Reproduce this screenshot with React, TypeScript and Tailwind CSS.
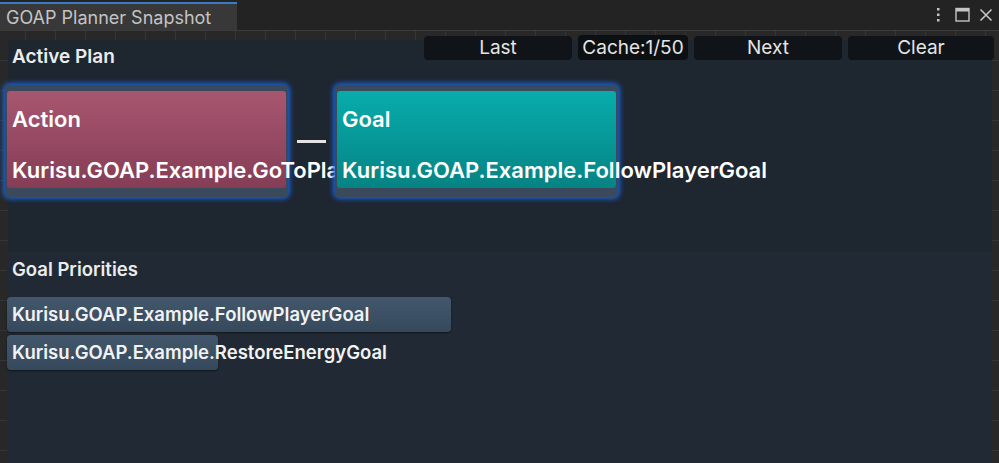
import React from "react";

function PlanCard({
  title,
  name,
  gradient,
  className,
}: {
  title: string;
  name: string;
  gradient: string;
  className?: string;
}) {
  return (
    <div
      className={
        "relative rounded-[5px] bg-[#3a4a5c] px-[2px] pt-[6px] pb-[9px] shadow-[0_0_5px_2px_#1d62d0] " +
        (className ?? "")
      }
    >
      <div className={"h-[97px] w-[279px] rounded-[3px] pl-[5px] text-white " + gradient}>
        <div className="pt-[14px] text-[22px] leading-[28px] font-semibold whitespace-nowrap">{title}</div>
        <div className="pt-[23px] text-[22px] leading-[28px] font-semibold whitespace-nowrap">{name}</div>
      </div>
    </div>
  );
}

export default function App() {
  const font = { fontFamily: "Inter, 'Noto Sans', sans-serif" };
  return (
    <div
      className="w-[999px] h-[463px] overflow-hidden bg-[#232323] flex flex-col font-['Inter','Noto_Sans',sans-serif]"
      style={font}
    >
      {/* Title bar */}
      <div className="h-[30px] flex items-stretch shrink-0 bg-[#232323]">
        <div className="mt-[2px] w-[237px] border-t-[2px] border-[#3b7bc4] bg-[#383838] pl-[6px] text-[18px] leading-[27px] text-[#c4c4c4]">
          GOAP Planner Snapshot
        </div>
        <div className="flex-1" />
        <div className="flex items-center gap-[0px] pr-[6px]">
          <svg width="8" height="18" viewBox="0 0 8 18" className="mr-[13px]">
            <rect x="3" y="2" width="2.5" height="2.5" fill="#c4c4c4" />
            <rect x="3" y="7.5" width="2.5" height="2.5" fill="#c4c4c4" />
            <rect x="3" y="13" width="2.5" height="2.5" fill="#c4c4c4" />
          </svg>
          <svg width="16" height="16" viewBox="0 0 16 16" className="mr-[8px]">
            <rect x="1" y="1.5" width="13" height="12.5" fill="none" stroke="#c4c4c4" strokeWidth="1.4" />
            <rect x="1" y="1.5" width="13" height="3" fill="#c4c4c4" />
          </svg>
          <svg width="14" height="14" viewBox="0 0 14 14">
            <path d="M1.5 1.5 L12.5 12.5 M12.5 1.5 L1.5 12.5" stroke="#c4c4c4" strokeWidth="1.6" />
          </svg>
        </div>
      </div>

      {/* Content with grid */}
      <div className="relative flex-1 border-t border-[#3c3c3c] bg-[#282828] [background-image:linear-gradient(to_right,#353535_1px,transparent_1px),linear-gradient(to_bottom,#353535_1px,transparent_1px)] [background-size:30px_30px] [background-position:25px_-1px]">
        <div className="flex flex-col pl-[7px] pr-[7px] pt-[9px] h-full">
          {/* Active Plan panel */}
          <div className="ml-[1px] h-[212px] rounded-tl-[5px] rounded-tr-[3px] bg-[#1e2630] pt-[6px] shrink-0">
            <div className="pl-[4px] text-[19px] leading-[22px] font-semibold text-[#ececec]">Active Plan</div>
            <div className="mt-[17px] -ml-[3px] flex items-center">
              <PlanCard
                title="Action"
                name="Kurisu.GOAP.Example.GoToPlayerAction"
                gradient="bg-[linear-gradient(to_bottom,#a85670,#853d56)]"
              />
              <div className="mx-[9px] h-[3px] w-[29px] bg-[#e4e4e4]" />
              <PlanCard
                title="Goal"
                name="Kurisu.GOAP.Example.FollowPlayerGoal"
                gradient="bg-[linear-gradient(to_bottom,#08acac,#068383)]"
                className="z-10"
              />
            </div>
          </div>

          {/* Goal Priorities panel */}
          <div className="flex-1 rounded-tl-[4px] rounded-tr-[4px] bg-[#212a34] pt-[6px]">
            <div className="pl-[5px] text-[18.5px] leading-[22px] font-semibold text-[#ececec]">Goal Priorities</div>
            <div className="mt-[17px] flex flex-col gap-[3px]">
              {[
                { name: "Kurisu.GOAP.Example.FollowPlayerGoal", w: 444 },
                { name: "Kurisu.GOAP.Example.RestoreEnergyGoal", w: 211 },
              ].map((g) => (
                <div key={g.name} className="relative h-[35px]">
                  <div
                    className="absolute left-0 top-0 h-[35px] rounded-[4px] bg-[linear-gradient(to_bottom,#43576c,#36495c)] shadow-[0_1px_2px_#10151b]"
                    style={{ width: g.w }}
                  />
                  <div className="relative pl-[5px] text-[18.5px] leading-[35px] font-semibold text-[#f2f2f2] whitespace-nowrap">
                    {g.name}
                  </div>
                </div>
              ))}
            </div>
          </div>
        </div>

        {/* Toolbar overlay */}
        <div className="absolute top-[4px] left-[424px] flex items-center gap-[6px] text-[19px] text-[#e4e4e4]">
          <div className="h-[24px] w-[148px] rounded-[4px] bg-[#101418] text-center leading-[24px]">Last</div>
          <div className="h-[25px] w-[110px] rounded-[4px] bg-[#0d1013] text-center leading-[25px]">Cache:1/50</div>
          <div className="h-[24px] w-[148px] rounded-[4px] bg-[#101418] text-center leading-[24px]">Next</div>
          <div className="h-[24px] w-[146px] rounded-[4px] bg-[#101418] text-center leading-[24px]">Clear</div>
        </div>
      </div>
    </div>
  );
}
